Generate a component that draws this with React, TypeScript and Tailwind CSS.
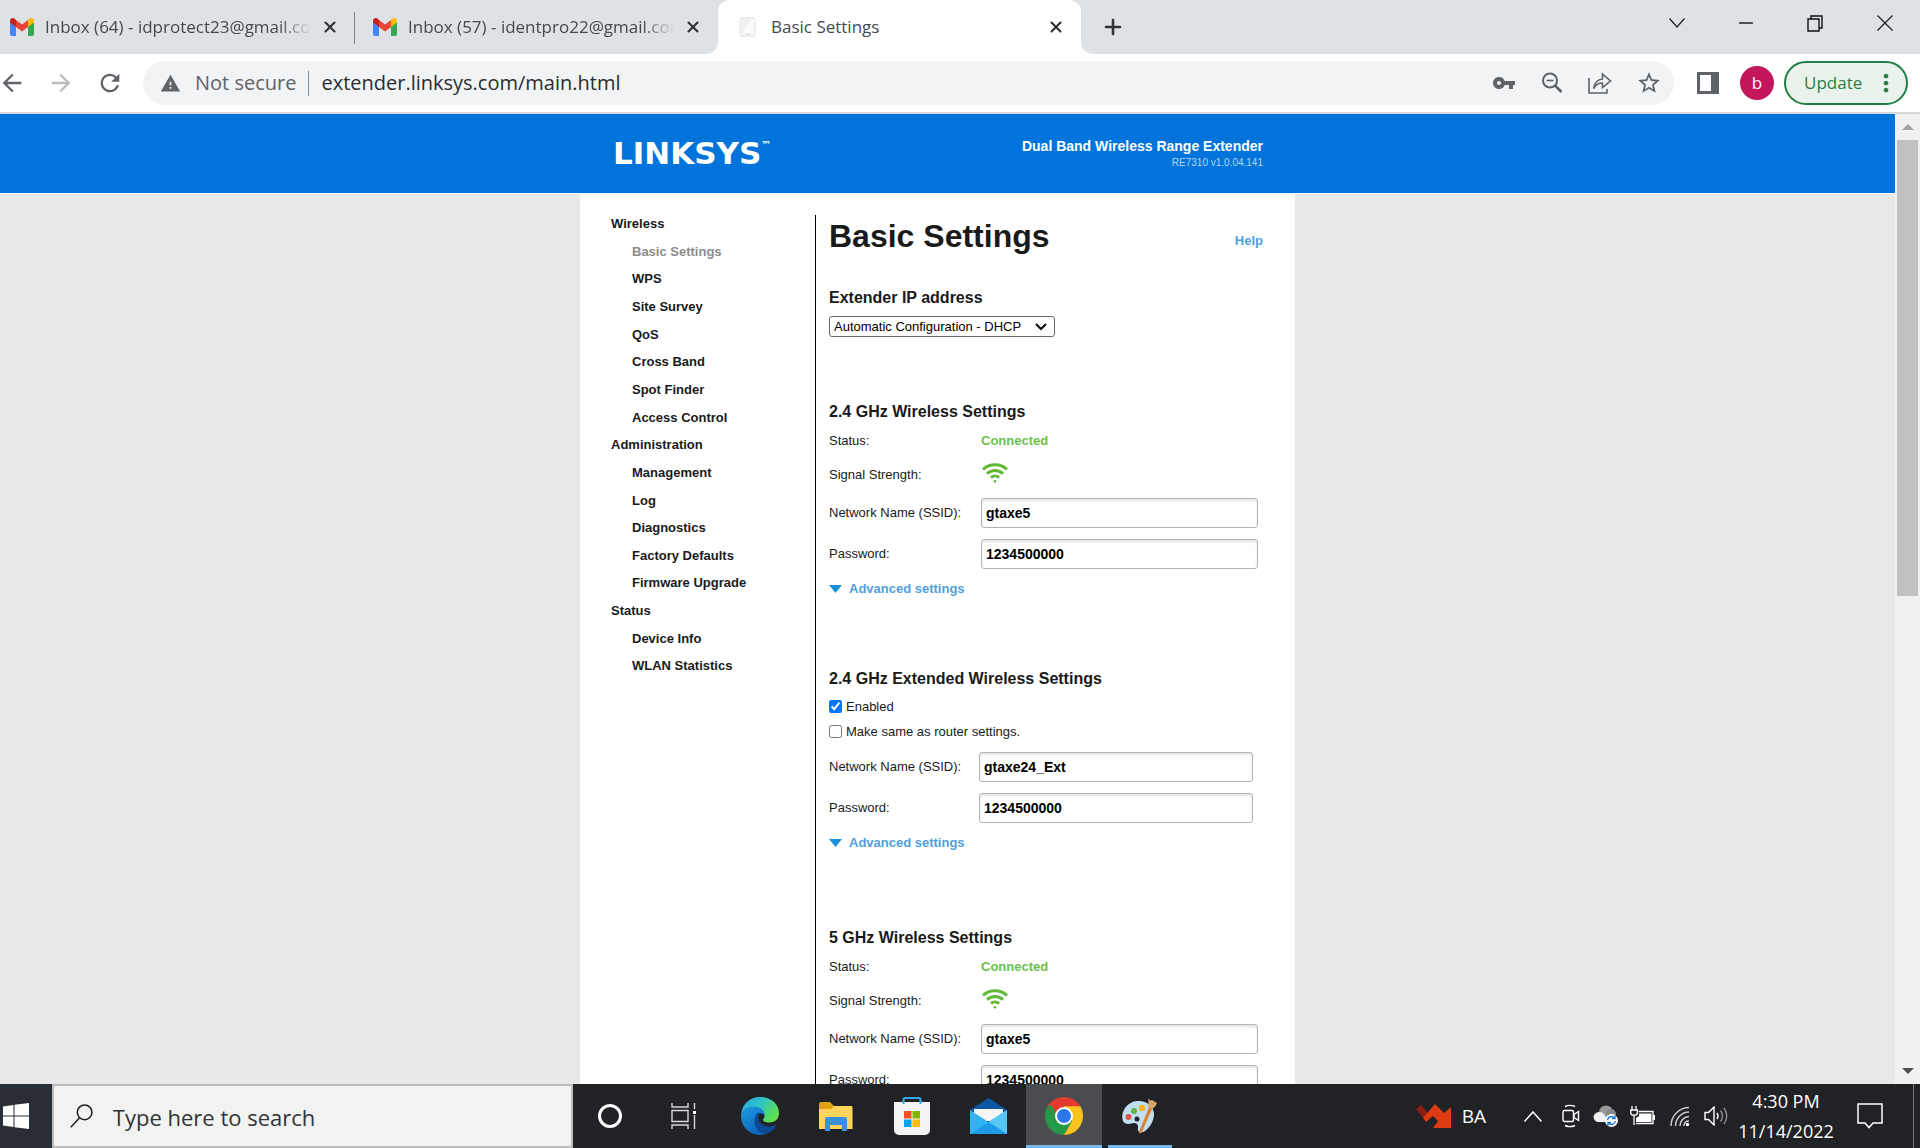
import { useState, type ReactNode } from 'react'
import { Minus, Plus, X } from 'lucide-react'
import {
  MdArrowBack,
  MdArrowForward,
  MdMoreVert,
  MdRefresh,
  MdStarBorder,
  MdVpnKey,
  MdWarning,
} from 'react-icons/md'

const menu = [
  { label: 'Wireless', top: true },
  { label: 'Basic Settings', current: true },
  { label: 'WPS' },
  { label: 'Site Survey' },
  { label: 'QoS' },
  { label: 'Cross Band' },
  { label: 'Spot Finder' },
  { label: 'Access Control' },
  { label: 'Administration', top: true },
  { label: 'Management' },
  { label: 'Log' },
  { label: 'Diagnostics' },
  { label: 'Factory Defaults' },
  { label: 'Firmware Upgrade' },
  { label: 'Status', top: true },
  { label: 'Device Info' },
  { label: 'WLAN Statistics' },
]

function GmailIcon() {
  return (
    <svg viewBox="0 0 24 18" className="h-[18px] w-6 shrink-0">
      <path d="M0 3v13a2 2 0 0 0 2 2h4V7z" fill="#4285f4" />
      <path d="M24 3v13a2 2 0 0 1-2 2h-4V7z" fill="#34a853" />
      <path d="M18 2v7l6-4.500V3c0-2.700-2.800-3.800-4.800-2.200z" fill="#fbbc04" />
      <path d="M0 3v1.500L6 9V2L4.800.8C2.800-.8 0 .3 0 3z" fill="#c5221f" />
      <path d="M6 2v7l6 4.500L18 9V2l-6 4.500z" fill="#ea4335" />
    </svg>
  )
}

function ExtenderIcon() {
  return (
    <svg viewBox="0 0 24 20" className="h-5 w-6 shrink-0">
      <rect x="4" y="0.500" width="15" height="19" rx="2" fill="#f1f1f1" stroke="#e6e6e6" />
      <path d="M6 16 16 2h2v15H6z" fill="#fafafa" />
      <path d="M9 17h5" stroke="#cfcfcf" />
    </svg>
  )
}

interface TabProps {
  title: string
  icon: ReactNode
  active?: boolean
  divider?: boolean
}

function Tab({ title, icon, active, divider }: TabProps) {
  return (
    <div
      className={`relative flex w-[363px] items-center pr-4 pl-[18px] ${
        active ? 'rounded-t-xl bg-white' : ''
      }`}
    >
      {icon}
      <span
        className={`ml-[11px] flex-1 overflow-hidden text-[17px] leading-9 whitespace-nowrap text-[#45494d] ${
          active ? '' : '[mask-image:linear-gradient(to_right,black_88%,transparent)]'
        }`}
      >
        {title}
      </span>
      <button aria-label={`Close ${title}`} className="ml-2.5 text-[#303235]">
        <X className="size-[18px]" strokeWidth={2.8} />
      </button>
      {divider && <span className="absolute top-3 right-0 h-8 w-px bg-[#808387]" />}
      {active && (
        <>
          <span className="absolute bottom-0 -left-3 size-3 bg-white">
            <span className="block size-3 rounded-br-xl bg-[#dee1e6]" />
          </span>
          <span className="absolute -right-3 bottom-0 size-3 bg-white">
            <span className="block size-3 rounded-bl-xl bg-[#dee1e6]" />
          </span>
        </>
      )}
    </div>
  )
}

function TabStrip() {
  return (
    <div className="flex h-[54px] shrink-0 bg-[#dee1e6]">
      <div className="-ml-2 flex">
        <Tab title="Inbox (64) - idprotect23@gmail.com" icon={<GmailIcon />} divider />
        <Tab title="Inbox (57) - identpro22@gmail.com" icon={<GmailIcon />} />
        <Tab title="Basic Settings" icon={<ExtenderIcon />} active />
      </div>
      <button aria-label="New tab" className="ml-5 text-[#303235]">
        <Plus className="size-6" strokeWidth={2.6} />
      </button>
      <div className="ml-auto flex pb-2 text-[#222]">
        <button aria-label="Search tabs" className="flex w-[69px] items-center justify-center">
          <svg viewBox="0 0 16 10" className="h-2.5 w-4" fill="none" stroke="currentColor" strokeWidth="1.300">
            <path d="m.5.5 7.500 8.500L15.500.5" />
          </svg>
        </button>
        <button aria-label="Minimize" className="flex w-[69px] items-center justify-center">
          <Minus className="size-[22px]" strokeWidth={1.5} />
        </button>
        <button aria-label="Restore" className="flex w-[70px] items-center justify-center">
          <svg viewBox="0 0 16 17" className="h-[17px] w-4" fill="none" stroke="#111" strokeWidth="1.400">
            <path d="M1 4h11v12H1zM4 4V1h11v12h-3" />
          </svg>
        </button>
        <button aria-label="Close" className="flex w-[70px] items-center justify-center">
          <svg viewBox="0 0 16 16" className="size-4" fill="none" stroke="currentColor" strokeWidth="1.300">
            <path d="m.5.5 15 15M15.500.5l-15 15" />
          </svg>
        </button>
      </div>
    </div>
  )
}

function Toolbar() {
  return (
    <div className="flex h-[60px] shrink-0 items-center border-b-2 border-[#d6dbdf] bg-white pr-3 text-[#5f6368]">
      <div className="-ml-0.5 flex w-[145px] items-center gap-[21px]">
        <button aria-label="Back">
          <MdArrowBack className="size-7" />
        </button>
        <button aria-label="Forward" className="text-[#b9bbbe]">
          <MdArrowForward className="size-7" />
        </button>
        <button aria-label="Reload">
          <MdRefresh className="size-7" />
        </button>
      </div>
      <div className="flex h-11 flex-1 items-center rounded-full bg-[#f1f3f4] pr-3 pl-[17px]">
        <MdWarning className="size-[21px]" />
        <span className="ml-3.5 text-[20px]">Not secure</span>
        <span className="mx-3 h-[25px] w-px bg-[#8b8f93]" />
        <input
          aria-label="Address"
          defaultValue="extender.linksys.com/main.html"
          className="min-w-0 flex-1 bg-transparent text-[20px] text-[#2b2d30] outline-none"
        />
        <div className="flex items-center gap-6">
          <button aria-label="Passwords">
            <MdVpnKey className="size-6" />
          </button>
          <button aria-label="Zoom">
            <svg viewBox="0 0 24 24" className="size-6" fill="none" stroke="currentColor" strokeWidth="2">
              <circle cx="10" cy="9.500" r="7" />
              <path d="M6.500 9.500h7" strokeWidth="1.600" />
              <path d="m15 14.500 6.500 6.500" strokeWidth="2.600" />
            </svg>
          </button>
          <button aria-label="Share">
            <svg viewBox="0 0 24 22" className="h-[22px] w-6" fill="none" stroke="currentColor" strokeWidth="1.600">
              <path d="M1 6v15h18v-4" />
              <path d="M5.500 16.500C6.500 11 10 7.500 14.500 7V2l8 7-8 6.500V11c-4-.2-6.500 1.500-9 5.500z" />
            </svg>
          </button>
          <button aria-label="Bookmark">
            <MdStarBorder className="size-[26px]" />
          </button>
        </div>
      </div>
      <button aria-label="Side panel" className="ml-[23px]">
        <svg viewBox="0 0 22 22" className="size-[22px]">
          <path d="M0 0h22v22H0zM3 3v16h11V3z" fill="currentColor" fillRule="evenodd" />
        </svg>
      </button>
      <button
        aria-label="Profile"
        className="ml-[21px] flex size-[34px] items-center justify-center rounded-full bg-[#c2185b] text-[17px] text-white"
      >
        b
      </button>
      <button className="ml-2.5 flex h-11 w-[124px] items-center justify-between rounded-full border-2 border-[#1e7e45] bg-[#e9f3ec] pr-1.5 pl-[18px] text-[17px] text-[#2c7d49]">
        Update
        <MdMoreVert className="size-7" />
      </button>
    </div>
  )
}

function SignalIcon() {
  return (
    <svg viewBox="0 0 26 20" className="mb-1 h-5 w-[26px]" fill="none" stroke="#61b935" strokeWidth="3">
      <path d="M1 6.500C7.500.2 18.500.2 25 6.500" />
      <path d="M5 10.700c4.500-4.300 11.500-4.300 16 0" />
      <path d="M9 14.700c2.300-2.200 5.700-2.200 8 0" />
      <circle cx="13" cy="18.200" r="1.300" fill="#61b935" stroke="none" />
    </svg>
  )
}

function SectionTitle({ children }: { children: ReactNode }) {
  return <h2 className="text-[16px] leading-6 font-bold">{children}</h2>
}

interface CredentialsProps {
  id: string
  ssid: string
  password: string
  extended?: boolean
}

function Credentials({ id, ssid, password, extended }: CredentialsProps) {
  const fields = [
    { name: 'ssid', label: 'Network Name (SSID):', value: ssid },
    { name: 'password', label: 'Password:', value: password },
  ]
  return (
    <>
      {fields.map((field) => (
        <div key={field.name} className="flex h-[41px] items-center">
          <label htmlFor={`${id}-${field.name}`} className={extended ? 'w-[150px]' : 'w-[152px]'}>
            {field.label}
          </label>
          <input
            id={`${id}-${field.name}`}
            defaultValue={field.value}
            className={`h-[30px] rounded-[3px] border border-[#b4b4b4] bg-white px-1 text-[14px] font-bold text-black shadow-[inset_0_2px_3px_#e4e4e4] ${
              extended ? 'w-[274px]' : 'w-[277px]'
            }`}
          />
        </div>
      ))}
      <a href="#advanced" className="flex h-[30px] items-center gap-[7px] font-bold text-[#519fe0]">
        <svg viewBox="0 0 13 8" className="h-2 w-[13px]">
          <path d="M0 0h13L6.500 8z" fill="#1a90d8" />
        </svg>
        Advanced settings
      </a>
    </>
  )
}

function WirelessSection({ id, title }: { id: string; title: string }) {
  return (
    <section className="mb-[63px]">
      <SectionTitle>{title}</SectionTitle>
      <div className="flex h-[33px] items-center">
        <span className="w-[152px]">Status:</span>
        <span className="font-bold text-[#6cc04a]">Connected</span>
      </div>
      <div className="flex h-[35px] items-center">
        <span className="w-[153px]">Signal Strength:</span>
        <SignalIcon />
      </div>
      <Credentials id={id} ssid="gtaxe5" password="1234500000" />
    </section>
  )
}

function Settings() {
  const [enabled, setEnabled] = useState(true)
  const [same, setSame] = useState(false)

  return (
    <main className="flex-1 border-l border-black pr-8 pl-[13px] text-[13px]">
      <div className="flex h-[71px] items-start justify-between">
        <h1 className="text-[32px] leading-[42px] font-bold">Basic Settings</h1>
        <a href="#help" className="pt-4 leading-5 font-bold text-[#519fe0]">
          Help
        </a>
      </div>

      <section className="mb-[63px]">
        <SectionTitle>
          <label htmlFor="ip-mode">Extender IP address</label>
        </SectionTitle>
        <div className="relative mt-1.5 w-[226px]">
          <select
            id="ip-mode"
            className="block h-[21px] w-full appearance-none rounded-[3px] border border-[#6a6a6a] bg-white pl-1 text-[13px] leading-4 text-black"
          >
            <option>Automatic Configuration - DHCP</option>
            <option>Static IP</option>
          </select>
          <svg
            viewBox="0 0 12 8"
            className="pointer-events-none absolute top-[7px] right-2 h-2 w-3"
            fill="none"
            stroke="#111"
            strokeWidth="2.200"
          >
            <path d="m1 1 5 5 5-5" />
          </svg>
        </div>
      </section>

      <WirelessSection id="w24" title="2.4 GHz Wireless Settings" />

      <section className="mb-17">
        <SectionTitle>2.4 GHz Extended Wireless Settings</SectionTitle>
        <div className="pt-[3px] pb-0.5">
          <label className="flex h-[25px] items-center gap-1">
            <input
              type="checkbox"
              checked={enabled}
              onChange={(e) => setEnabled(e.target.checked)}
              className="size-[13px]"
            />
            Enabled
          </label>
          <label className="flex h-[25px] items-center gap-1">
            <input
              type="checkbox"
              checked={same}
              onChange={(e) => setSame(e.target.checked)}
              className="size-[13px]"
            />
            Make same as router settings.
          </label>
        </div>
        <Credentials id="x24" ssid="gtaxe24_Ext" password="1234500000" extended />
      </section>

      <WirelessSection id="w5" title="5 GHz Wireless Settings" />
    </main>
  )
}

function Page() {
  return (
    <div className="flex min-h-0 flex-1 bg-[#e8e8e8] font-['Liberation_Sans',Arial,sans-serif] text-[#1a1a1a]">
      <div className="flex flex-1 flex-col overflow-hidden">
        <header className="flex h-20 shrink-0 justify-center border-b border-white bg-[#0074da] pr-5 text-white">
          <div className="flex w-[715px] justify-between pr-8 pl-[33px]">
            <div className="flex items-start pt-[21px] font-['DejaVu_Sans',sans-serif] font-bold">
              <span className="text-[31px] leading-9">LINKSYS</span>
              <span className="pt-1 text-[10px] leading-3">™</span>
            </div>
            <div className="pt-6 text-right">
              <p className="text-[14px] leading-4 font-bold">Dual Band Wireless Range Extender</p>
              <p className="text-[10px] leading-[18px] text-[#b5d5f3]">RE7310 v1.0.04.141</p>
            </div>
          </div>
        </header>
        <div className="flex min-h-0 flex-1 justify-center pr-5">
          <div className="flex w-[715px] bg-white pt-[21px]">
            <nav className="-mt-[5px] grid h-[470px] w-[235px] auto-rows-fr items-center pl-[31px] text-[13px] font-bold">
              {menu.map((item) => (
                <a
                  key={item.label}
                  href="#menu"
                  className={`${item.top ? '' : 'pl-[21px]'} ${item.current ? 'text-[#8c8c8c]' : ''}`}
                >
                  {item.label}
                </a>
              ))}
            </nav>
            <Settings />
          </div>
        </div>
      </div>
      <div className="flex w-[25px] flex-col items-center bg-[#f1f1f1]">
        <svg viewBox="0 0 12 6" className="my-[10px] h-1.5 w-3 shrink-0">
          <path d="M6 0l6 6H0z" fill="#a3a3a3" />
        </svg>
        <div className="h-[456px] w-[21px] bg-[#c1c1c1]" />
        <svg viewBox="0 0 12 6" className="mt-auto mb-[10px] h-1.5 w-3 shrink-0">
          <path d="M0 0h12L6 6z" fill="#505050" />
        </svg>
      </div>
    </div>
  )
}

interface TaskButtonProps {
  label: string
  active?: boolean
  open?: boolean
  children: ReactNode
}

function TaskButton({ label, active, open, children }: TaskButtonProps) {
  return (
    <button
      aria-label={label}
      className={`relative flex w-[76px] items-center justify-center ${active ? 'bg-[#4b4c50]' : ''}`}
    >
      {children}
      {active && <span className="absolute inset-x-0 bottom-0 h-[3px] bg-[#76b9ed]" />}
      {open && <span className="absolute inset-x-1.5 bottom-0 h-[3px] bg-[#76b9ed]" />}
    </button>
  )
}

function EdgeIcon() {
  return (
    <svg viewBox="0 0 38 38" className="size-[38px]">
      <defs>
        <linearGradient id="edge-top" x1="0" y1="0" x2="1" y2="0.500">
          <stop offset="0" stopColor="#2aa6e0" />
          <stop offset="0.500" stopColor="#2fc4c6" />
          <stop offset="1" stopColor="#5fe052" />
        </linearGradient>
        <linearGradient id="edge-left" x1="0" y1="0" x2="0.600" y2="1">
          <stop offset="0" stopColor="#1d9de0" />
          <stop offset="1" stopColor="#0c63bd" />
        </linearGradient>
      </defs>
      <path d="M.3 17C1 7 9 0 19 0c11 0 19 7 19 16 0 6-4 9.500-9.500 9.500-4 0-6.500-1.200-6.500-2.500 0-1 1.500-1.600 1.500-4.500 0-4-4-7-9.500-7C8 11.500 2 13.500.3 17z" fill="url(#edge-top)" />
      <path d="M0 19C0 13.500 6 9.500 13.500 9.500c6 0 10 4 10 8.500-3-3-9.500-1.500-9.500 6 0 7 5 12 11 13C12 41 0 32 0 19z" fill="url(#edge-left)" />
      <path d="M16 16c-6 9-1 20 9.500 21C30 35.500 33.500 32.500 35.300 28.500c.3-.7-.4-1.200-1-.8C29 31 22 29.500 18.500 24.500c-1.500-2.500-1.500-6 .5-8.700z" fill="#0d4a94" />
    </svg>
  )
}

function FolderIcon() {
  return (
    <svg viewBox="0 0 34 29" className="h-[29px] w-[34px]">
      <path d="M0 2a2 2 0 0 1 2-2h9l4 4h17a1 1 0 0 1 1 1v4H0z" fill="#e0a30c" />
      <path d="M0 7h12l3-3h17a1.500 1.500 0 0 1 1.500 1.500V27H0z" fill="#ffd45c" />
      <path d="M6 29V17a2 2 0 0 1 2-2h18a2 2 0 0 1 2 2v12h-5v-6H11v6z" fill="#3a8fdb" />
    </svg>
  )
}

function StoreIcon() {
  return (
    <svg viewBox="0 0 36 38" className="h-[38px] w-9">
      <path d="M9.500 7V3a2 2 0 0 1 2-2h13a2 2 0 0 1 2 2v4" fill="none" stroke="#35a9e6" strokeWidth="2" />
      <path d="M0 5h36v28a5 5 0 0 1-5 5H5a5 5 0 0 1-5-5z" fill="#f3f3f3" />
      <path d="M9.500 7V4M26.500 7V4" stroke="#35a9e6" strokeWidth="2" />
      <path d="M10 14h7.500v7.500H10z" fill="#f25022" />
      <path d="M18.500 14H26v7.500h-7.500z" fill="#7fba00" />
      <path d="M10 22.500h7.500V30H10z" fill="#00a4ef" />
      <path d="M18.500 22.500H26V30h-7.500z" fill="#ffb900" />
    </svg>
  )
}

function MailIcon() {
  return (
    <svg viewBox="0 0 37 36" className="h-9 w-[37px]">
      <path d="M0 12 18.500 0 37 12v4H0z" fill="#0b57a4" />
      <path d="M4 11h29v12H4z" fill="#f6f6f6" />
      <path d="M0 12l18.500 12L37 12v24H0z" fill="#2fb5f2" />
      <path d="M18.500 24 37 12v24z" fill="#55c8f7" />
      <path d="M18.500 24 0 36h37z" fill="#1d9be6" />
    </svg>
  )
}

function ChromeIcon() {
  return (
    <svg viewBox="0 0 38 38" className="size-[38px]">
      <path d="M19 19 2.550 9.500A19 19 0 0 1 35.450 9.500z" fill="#e33b2e" />
      <path d="M2.550 9.500A19 19 0 0 0 19 38l8.230-14.250L19 19 10.770 23.750z" fill="#249a48" />
      <path d="M35.450 9.500A19 19 0 0 1 19 38l8.230-14.250L19 9.500z" fill="#fcc31e" />
      <path d="M2.550 9.500 10.770 23.750 19 19V9.500z" fill="#e33b2e" />
      <path d="M2.550 9.500 10.770 23.750 14 21 6 8z" fill="#249a48" />
      <path d="M35.450 9.500H19v4h9z" fill="#fcc31e" />
      <circle cx="19" cy="19" r="9" fill="#fff" />
      <circle cx="19" cy="19" r="7" fill="#2a78e8" />
    </svg>
  )
}

function PaintIcon() {
  return (
    <svg viewBox="0 0 36 36" className="size-9">
      <path d="M15 3c9-1 17 5 17 13 0 7-4 13-9 17-4 3-8 1-7-3 .5-3-1-5-4-5-4 1-9 2-11-2C-2 14 5 4 15 3z" fill="#bfe0f1" />
      <circle cx="15" cy="21" r="2.500" fill="#212226" />
      <circle cx="6.500" cy="19" r="3" fill="#e0524a" />
      <circle cx="12" cy="13" r="3" fill="#5cb544" />
      <circle cx="20" cy="10" r="3.200" fill="#f3b61f" />
      <path d="m27 9 3.500 1L20 34c-1 2-3.500 1.500-3 0z" fill="#d98236" />
      <path d="M26 0c1 2 3 3 4 2l5 3c-1 3-3 5-5 6l-3.500-2C26 6 27 4 26 0z" fill="#d8a56c" />
    </svg>
  )
}

function Tray() {
  return (
    <div className="ml-auto flex items-center text-white">
      <svg viewBox="0 0 35 24" className="h-6 w-[35px]">
        <path d="M0 5 5 1l8 9-4 6z" fill="#8f1d12" />
        <path d="M7 14 19 0l9 9 7-6v21H17l5-7-5-5-7 6z" fill="#dd3b12" />
      </svg>
      <span className="ml-[11px] text-[19px]">BA</span>
      <svg viewBox="0 0 18 11" className="ml-[38px] h-[11px] w-[18px]" fill="none" stroke="currentColor" strokeWidth="1.500">
        <path d="M.5 10.500 9 1l8.500 9.500" />
      </svg>
      <svg viewBox="0 0 18 24" className="ml-5 h-6 w-[18px]" fill="none" stroke="currentColor" strokeWidth="1.400">
        <rect x="1" y="6.500" width="10.500" height="11" rx="1.500" />
        <path d="m12 10.500 4.500-3v9l-4.500-3zM3 2.500Q8 .2 13 2.500M3 21.500q5 2.300 10 0" />
      </svg>
      <svg viewBox="0 0 26 22" className="ml-[13px] h-[22px] w-[26px]">
        <circle cx="13" cy="7.500" r="7" fill="#9a9a9a" />
        <circle cx="18" cy="9" r="5" fill="#8a8a8a" />
        <path d="M4 17a5 5 0 0 1-1-9c3-2 6-1 8 1l4 8z" fill="#f0f0f0" />
        <circle cx="18.500" cy="15.500" r="6.500" fill="#fff" />
        <path d="M14.500 15a4 4 0 0 1 7-2M22.500 16a4 4 0 0 1-7 2M22 10.500V13.500h-3M15 20.500v-3h3" fill="none" stroke="#1976c9" strokeWidth="1.400" />
      </svg>
      <svg viewBox="0 0 25 20" className="ml-[11px] h-5 w-[25px]" fill="none" stroke="currentColor" strokeWidth="1.300">
        <path d="M2 0v4M6 0v4M.8 4h6.500v3c0 3-6.500 3-6.500 0zM4 9.500V19" />
        <path d="M8.500 5.500H23v12H6M24.300 9v5" />
        <path d="M9 7.500h12.500v8.500H6v-4l3-2z" fill="currentColor" stroke="none" />
      </svg>
      <svg viewBox="0 0 20 21" className="ml-[15px] h-[21px] w-5" fill="none" stroke="#c9c9c9" strokeWidth="1.500">
        <path d="M1 20C1 10 9 1.500 19 1.500M5.500 20C5.500 12.500 11.500 6 19 6M10 20c0-5 4-9.500 9-9.500M14 20c0-3 2-5 5-5" />
        <circle cx="17.500" cy="18.500" r="1.700" fill="#fff" stroke="none" />
      </svg>
      <svg viewBox="0 0 24 20" className="ml-3.5 h-5 w-6" fill="none" stroke="currentColor" strokeWidth="1.400">
        <path d="M1 6.500h3.500L10 1v18l-5.500-5.500H1z" />
        <path d="M13 7q2 3 0 6" />
        <path d="M16.500 4.500q4 5.500 0 11M20 2q5.500 8 0 16" stroke="#8d8d8d" />
      </svg>
      <div className="ml-2 w-[100px] text-center text-[18px] leading-[30px]">
        <div>4:30 PM</div>
        <div>11/14/2022</div>
      </div>
      <button aria-label="Notifications" className="ml-[21px]">
        <svg viewBox="0 0 26 26" className="size-[26px]" fill="none" stroke="currentColor" strokeWidth="1.500">
          <path d="M1 1h24v19H16l-4 4.500L8 20H1z" />
        </svg>
      </button>
      <span className="mr-1.5 ml-[30px] h-16 w-px bg-[#77787a]" />
    </div>
  )
}

function Taskbar() {
  return (
    <footer className="flex h-16 shrink-0 bg-[#212226]">
      <button aria-label="Start" className="flex w-[52px] items-center bg-[#292d36] pl-[3px]">
        <svg viewBox="0 0 26 26" className="size-[26px]" fill="#fff">
          <path d="M0 3.500 10.500 2v10.500H0zM11.500 1.800 26 0v12.500H11.500zM0 13.500h10.500V24L0 22.500zM11.500 13.500H26V26l-14.500-1.800z" />
        </svg>
      </button>
      <label className="flex w-[521px] items-center border-2 border-[#bcbcbc] bg-[#f2f2f2] pl-4">
        <svg viewBox="0 0 25 26" className="h-[26px] w-[25px]" fill="none" stroke="#222" strokeWidth="1.700">
          <circle cx="16" cy="9" r="8" />
          <path d="M10.500 15 .8 25.300" />
        </svg>
        <input
          aria-label="Search"
          placeholder="Type here to search"
          className="ml-5 w-full bg-transparent pt-0.5 text-[22px] text-[#333] outline-none placeholder:text-[#333]"
        />
      </label>
      <button aria-label="Cortana" className="flex w-[73px] items-center justify-center">
        <span className="size-6 rounded-full border-[3px] border-white" />
      </button>
      <button aria-label="Task view" className="flex w-[76px] items-center justify-center">
        <svg viewBox="0 0 26 26" className="size-[26px]" fill="none" stroke="#d8d8d8" strokeWidth="1.400">
          <path d="M1 7.500h16v11H1zM1 0v4h16V0M1 26v-4h16v4M23.500 0v6M23.500 12v14" />
          <path d="M22 8h3v3h-3z" fill="#fff" stroke="none" />
        </svg>
      </button>
      <TaskButton label="Edge">
        <EdgeIcon />
      </TaskButton>
      <TaskButton label="File Explorer">
        <FolderIcon />
      </TaskButton>
      <TaskButton label="Store">
        <StoreIcon />
      </TaskButton>
      <TaskButton label="Mail">
        <MailIcon />
      </TaskButton>
      <TaskButton label="Chrome" active>
        <ChromeIcon />
      </TaskButton>
      <TaskButton label="Paint" open>
        <PaintIcon />
      </TaskButton>
      <Tray />
    </footer>
  )
}

export default function App() {
  return (
    <div className="flex h-screen flex-col overflow-hidden font-['Open_Sans','Noto_Sans',sans-serif]">
      <TabStrip />
      <Toolbar />
      <Page />
      <Taskbar />
    </div>
  )
}
